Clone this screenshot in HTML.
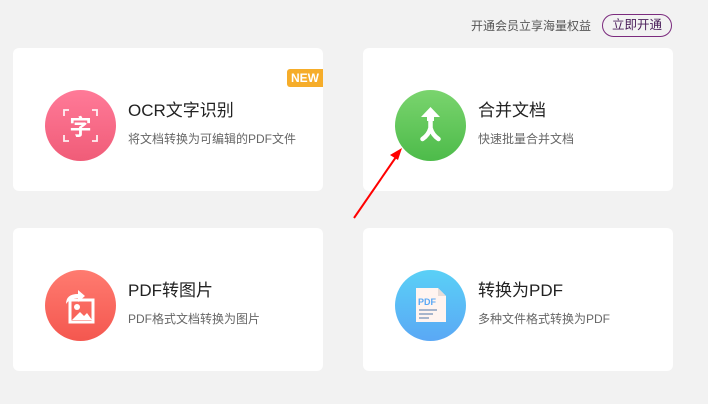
<!DOCTYPE html>
<html><head><meta charset="utf-8"><style>
body{margin:0;width:708px;height:404px;background:#f2f2f2;font-family:"Liberation Sans","Noto Sans CJK SC",sans-serif;position:relative;overflow:hidden}
.top{position:absolute;right:117px;top:17px;font-size:12px;color:#555}
.btn{position:absolute;left:602px;top:14px;width:70px;height:23px;border:1px solid #7b2b7e;border-radius:12px;box-sizing:border-box;font-size:12.5px;color:#4a1d5a;text-align:center;line-height:21px}
.card{position:absolute;width:310px;height:143px;background:#fff;border-radius:6px}
.ic{position:absolute;left:32px;top:42px;width:71px;height:71px;border-radius:50%}
.t{position:absolute;left:115px;top:48px;font-size:17px;color:#222}
.s{position:absolute;left:115px;top:82px;font-size:12px;color:#666}
.new{position:absolute;right:0;top:21px;background:#f6ad2a;color:#fff;font-size:12px;font-weight:bold;padding:1px 4px;border-radius:3px 0 0 3px;line-height:16px}
</style></head><body>
<div class="top">开通会员立享海量权益</div>
<div class="btn">立即开通</div>
<div class="card" style="left:13px;top:48px">
 <div class="new">NEW</div>
 <div class="ic" style="background:linear-gradient(#ff7a98,#f05c78)">
  <svg width="71" height="71" viewBox="0 0 71 71" fill="none" stroke="#fff" stroke-width="1.8" opacity=".9"><path d="M19 26v-6h5M47 20h5v6M52 45v6h-5M24 51h-5v-6"/></svg>
  <div style="position:absolute;left:0;top:20px;width:71px;text-align:center;color:#fff;font-size:22px;font-weight:bold">字</div>
 </div>
 <div class="t">OCR文字识别</div><div class="s">将文档转换为可编辑的PDF文件</div>
</div>
<div class="card" style="left:363px;top:48px">
 <div class="ic" style="background:linear-gradient(#7ad46e,#4dbb4a)">
  <svg width="71" height="71" viewBox="0 0 71 71"><path d="M35.5 17L45 27h-6v4h-7v-4h-6z" fill="#fff"/><path d="M35.5 27v11M35.5 38q-2 7-8 11M35.5 38q2 7 8 11" fill="none" stroke="#fff" stroke-width="4.5" stroke-linecap="round" stroke-linejoin="round"/></svg>
 </div>
 <div class="t">合并文档</div><div class="s">快速批量合并文档</div>
</div>
<div class="card" style="left:13px;top:228px">
 <div class="ic" style="background:linear-gradient(#ff7b70,#f4574f)">
  <svg width="71" height="71" viewBox="0 0 71 71"><rect x="25" y="30" width="23" height="22" fill="none" stroke="#fff" stroke-width="3"/><circle cx="32" cy="37" r="3" fill="#fff"/><path d="M27 50l8-8 4 4 3-3 5 7z" fill="#fff"/><path d="M21 34q0-10 12-10v-4l7 6-7 6v-4q-8 0-12 6z" fill="#fff"/></svg>
 </div>
 <div class="t">PDF转图片</div><div class="s">PDF格式文档转换为图片</div>
</div>
<div class="card" style="left:363px;top:228px">
 <div class="ic" style="background:linear-gradient(#5ad0f6,#5aa8f5)">
  <svg width="71" height="71" viewBox="0 0 71 71"><path d="M21 18h22l8 8v26H21z" fill="#fff4f0"/><path d="M43 18v8h8" fill="#e6dcd8"/><text x="23" y="35" font-family="Liberation Sans" font-size="9" font-weight="bold" fill="#5aa8f5">PDF</text><path d="M24 40h18M24 44h14M24 48h10" stroke="#8aa0c0" stroke-width="1.5"/></svg>
 </div>
 <div class="t">转换为PDF</div><div class="s">多种文件格式转换为PDF</div>
</div>
<svg style="position:absolute;left:0;top:0" width="708" height="404"><path d="M354 218L396 157" stroke="#f00" stroke-width="2"/><path d="M402 148l-12 7 8 5z" fill="#f00"/></svg>
</body></html>
